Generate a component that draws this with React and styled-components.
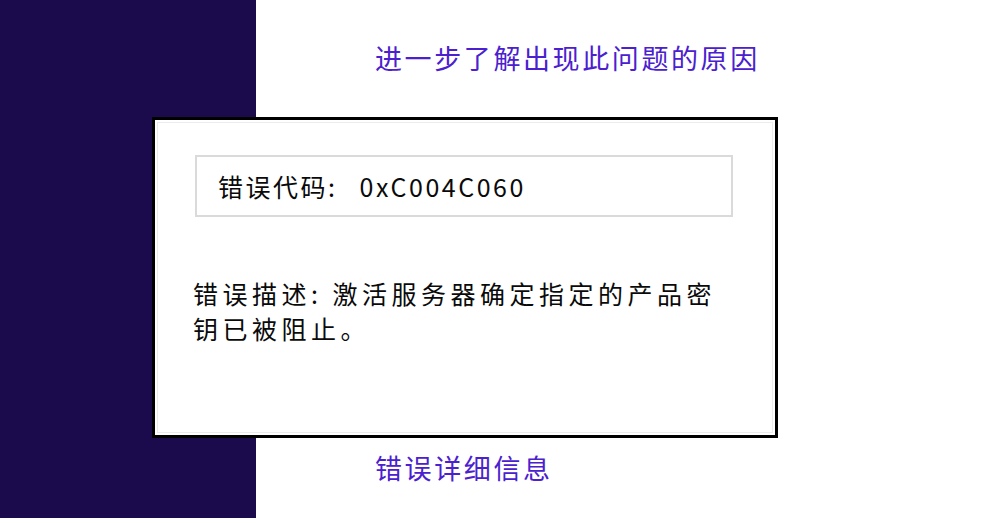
import React from "react";
import styled, { createGlobalStyle } from "styled-components";

const Global = createGlobalStyle`
  html, body { margin: 0; padding: 0; background: #ffffff; }
  body { font-family: "Noto Sans CJK SC", "Noto Sans", sans-serif; }
  #root { width: 1002px; height: 518px; }
`;

const Page = styled.div`
  position: relative;
  display: flex;
  width: 1002px;
  height: 518px;
  overflow: hidden;
  background: #ffffff;
`;

const Sidebar = styled.div`
  width: 256px;
  flex: none;
  background: #1b0a4c;
`;

const Main = styled.div`
  flex: 1;
  display: flex;
  flex-direction: column;
  justify-content: space-between;
  padding: 39px 0 31px 119px;
`;

const Link = styled.a`
  font-family: "Noto Sans CJK SC", sans-serif;
  font-size: 27px;
  line-height: 38px;
  letter-spacing: 2.6px;
  color: #4a20cf;
  text-decoration: none;
  white-space: nowrap;
  cursor: pointer;
`;

const Dialog = styled.div`
  position: absolute;
  left: 152px;
  top: 117px;
  width: 626px;
  height: 321px;
  box-sizing: border-box;
  background: #ffffff;
  border: 3px solid #000000;
  box-shadow: inset 0 0 0 2px #ffffff, inset 0 0 0 3px #ececec;
  padding: 35px 0 0 38px;
  display: flex;
  flex-direction: column;
`;

const CodeBox = styled.div`
  width: 538px;
  height: 62px;
  margin-left: 2px;
  box-sizing: border-box;
  border: 2px solid #dadada;
  display: flex;
  align-items: center;
  padding-left: 21px;
  font-size: 25px;
  letter-spacing: 2.5px;
  word-spacing: 14px;
  color: #0a0a0a;
  white-space: nowrap;
`;

const Description = styled.p`
  margin: 59px 0 0 0;
  width: 532px;
  font-size: 25px;
  line-height: 35px;
  letter-spacing: 4.5px;
  color: #0a0a0a;
`;

export default function App() {
  return (
    <>
      <Global />
      <Page>
        <Sidebar />
        <Main>
          <Link>进一步了解出现此问题的原因</Link>
          <Link>错误详细信息</Link>
        </Main>
        <Dialog>
          <CodeBox>错误代码: 0xC004C060</CodeBox>
          <Description>错误描述: 激活服务器确定指定的产品密钥已被阻止。</Description>
        </Dialog>
      </Page>
    </>
  );
}
